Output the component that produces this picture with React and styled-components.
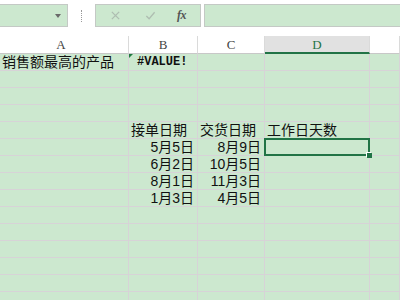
import React from "react";
import styled, { createGlobalStyle } from "styled-components";

const GlobalStyle = createGlobalStyle`
  html, body {
    margin: 0;
    padding: 0;
    background: #ffffff;
    overflow: hidden;
  }
  body {
    font-family: "Noto Sans CJK SC", "Liberation Sans", sans-serif;
  }
`;

const GREEN = "#cce8cf";
const GRID = "#d7d3d7";
const ACCENT = "#217346";

const columns = ["A", "B", "C", "D", "E"];

const rows = [
  { a: "销售额最高的产品", b: "#VALUE!", error: true },
  {},
  {},
  {},
  { b: "接单日期", c: "交货日期", d: "工作日天数", head: true },
  { b: "5月5日", c: "8月9日", selected: true },
  { b: "6月2日", c: "10月5日" },
  { b: "8月1日", c: "11月3日" },
  { b: "1月3日", c: "4月5日" },
  {},
  {},
  {},
  {},
  {},
  {},
];

const App = () => {
  return (
    <Screen>
      <GlobalStyle />
      <Toolbar>
        <NameBox>
          <Caret />
        </NameBox>
        <Grip />
        <ButtonBox>
          <ToolIcon viewBox="0 0 12 12">
            <path d="M2 2 L10 10 M10 2 L2 10" />
          </ToolIcon>
          <ToolIcon viewBox="0 0 12 12">
            <path d="M1.5 6.5 L4.5 9.5 L10.5 2.5" />
          </ToolIcon>
          <Fx>fx</Fx>
        </ButtonBox>
        <FormulaInput />
      </Toolbar>

      <Sheet>
        {columns.map((col) => (
          <ColHeader key={col} $active={col === "D"} $first={col === "A"}>
            {col !== "E" ? col : ""}
          </ColHeader>
        ))}
        {rows.map((row, i) => (
          <React.Fragment key={i}>
            <Cell>{row.a}</Cell>
            {row.error ? (
              <Cell $mono>
                <ErrorMark />
                {row.b}
              </Cell>
            ) : (
              <Cell $right={!row.head}>{row.b}</Cell>
            )}
            <Cell $right={!row.head}>{row.c}</Cell>
            <Cell>
              {row.d}
              {row.selected && (
                <Selection>
                  <FillHandle />
                </Selection>
              )}
            </Cell>
            <Cell />
          </React.Fragment>
        ))}
      </Sheet>
    </Screen>
  );
};

const Screen = styled.div`
  width: 400px;
  height: 300px;
  overflow: hidden;
  background: #ffffff;
`;

const Toolbar = styled.div`
  display: flex;
  align-items: center;
  height: 23px;
  padding-top: 4px;
  margin-bottom: 9px;
`;

const Box = styled.div`
  box-sizing: border-box;
  height: 23px;
  background: ${GREEN};
  border: 1px solid #c4c9c5;
`;

const NameBox = styled(Box)`
  position: relative;
  width: 68px;
  border-left: none;
  display: flex;
  align-items: center;
  justify-content: flex-end;
  padding-right: 6px;
`;

const Caret = styled.span`
  width: 0;
  height: 0;
  border-left: 3.5px solid transparent;
  border-right: 3.5px solid transparent;
  border-top: 4px solid #6a6a6a;
`;

const Grip = styled.span`
  width: 0;
  height: 12px;
  margin-left: 13px;
  border-left: 1px dotted #9a9a9a;
`;

const ButtonBox = styled(Box)`
  width: 106px;
  margin-left: 13px;
  display: grid;
  grid-template-columns: 36px 34px 1fr;
  align-items: center;
  justify-items: center;
  padding-left: 1px;
`;

const ToolIcon = styled.svg`
  width: 11px;
  height: 11px;
  fill: none;
  stroke: #aebdb1;
  stroke-width: 1.4;
`;

const Fx = styled.span`
  font-family: "Liberation Serif", serif;
  font-style: italic;
  font-weight: bold;
  font-size: 12px;
  color: #555555;
  letter-spacing: -0.5px;
  transform: translateX(-2px);
`;

const FormulaInput = styled(Box)`
  flex: 1;
  margin-left: 3px;
  border-right: none;
`;

const Sheet = styled.div`
  display: grid;
  grid-template-columns: 129px 69px 67px 105px 1fr;
  grid-template-rows: 18px;
  grid-auto-rows: 17px;
  background: ${GREEN};
`;

const ColHeader = styled.div`
  box-sizing: border-box;
  height: 18px;
  background: ${(p) => (p.$active ? "#e1e1e1" : "#ffffff")};
  border-right: 1px solid #dadada;
  border-bottom: ${(p) => (p.$active ? `2px solid ${ACCENT}` : "1px solid #c8c8c8")};
  font-family: "Liberation Serif", "DejaVu Serif", serif;
  font-size: 13px;
  line-height: 17px;
  text-align: center;
  color: ${(p) => (p.$active ? ACCENT : "#444444")};
  padding-right: ${(p) => (p.$first ? "6px" : "0")};
`;

const Cell = styled.div`
  position: relative;
  box-sizing: border-box;
  border-right: 1px solid ${GRID};
  border-bottom: 1px solid ${GRID};
  padding: 0 ${(p) => (p.$right ? "3px" : "2px")} 0 ${(p) => (p.$mono ? "8px" : "2px")};
  font-family: ${(p) =>
    p.$mono
      ? `"Liberation Mono", "DejaVu Sans Mono", monospace`
      : `"Liberation Sans", "Noto Sans CJK SC", sans-serif`};
  font-size: ${(p) => (p.$mono ? "12px" : "14px")};
  font-weight: ${(p) => (p.$mono ? "bold" : "normal")};
  line-height: 16px;
  color: #111111;
  text-align: ${(p) => (p.$right ? "right" : "left")};
  white-space: nowrap;
`;

const ErrorMark = styled.span`
  position: absolute;
  top: 0;
  left: 0;
  width: 0;
  height: 0;
  border-top: 4px solid #1f7a3f;
  border-right: 4px solid transparent;
`;

const Selection = styled.div`
  position: absolute;
  z-index: 2;
  top: -1px;
  left: -1px;
  right: -1px;
  bottom: -1px;
  border: 2px solid ${ACCENT};
  pointer-events: none;
`;

const FillHandle = styled.span`
  position: absolute;
  right: -4px;
  bottom: -4px;
  width: 5px;
  height: 5px;
  background: ${ACCENT};
  box-shadow: -1px -1px 0 #ffffff;
`;

export default App;
